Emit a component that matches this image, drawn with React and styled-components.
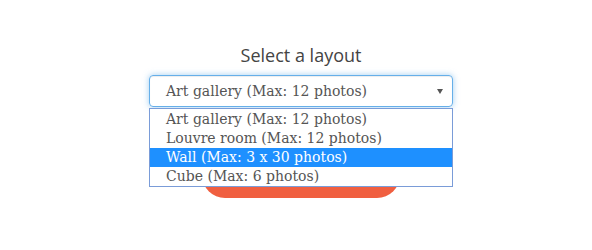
import React from "react";
import styled, { createGlobalStyle } from "styled-components";

const layouts = [
  "Art gallery (Max: 12 photos)",
  "Louvre room (Max: 12 photos)",
  "Wall (Max: 3 x 30 photos)",
  "Cube (Max: 6 photos)",
];

const GlobalStyle = createGlobalStyle`
  html, body {
    margin: 0;
    background: #fff;
  }
`;

const Page = styled.div`
  width: 592px;
  height: 250px;
  display: flex;
  flex-direction: column;
  align-items: center;
  padding: 43px 0 0 10px;
  box-sizing: border-box;
`;

const Title = styled.h3`
  margin: 0;
  font-family: "Open Sans", sans-serif;
  font-weight: 400;
  font-size: 18px;
  line-height: 24px;
  color: #444;
`;

const SelectWrap = styled.div`
  position: relative;
  width: 304px;
  margin-top: 8px;
`;

const SelectBox = styled.div`
  height: 32px;
  box-sizing: border-box;
  border: 1px solid #66afe9;
  border-radius: 4px;
  box-shadow: inset 0 1px 1px rgba(0, 0, 0, 0.075), 0 0 6px rgba(102, 175, 233, 0.6);
  display: flex;
  align-items: center;
  justify-content: space-between;
  padding: 0 9px 0 16px;
  font-family: "DejaVu Serif", serif;
  font-size: 14px;
  color: #555;
`;

const Arrow = styled.span`
  width: 0;
  height: 0;
  border-left: 3px solid transparent;
  border-right: 3px solid transparent;
  border-top: 5px solid #555;
`;

const List = styled.ul`
  position: absolute;
  top: 33px;
  left: 0;
  right: 0;
  margin: 0;
  padding: 1px 0 0;
  list-style: none;
  background: #fff;
  border: 1px solid #7a9cd8;
  z-index: 2;
`;

const Option = styled.li`
  height: 19px;
  line-height: 19px;
  padding-left: 16px;
  font-family: "DejaVu Serif", serif;
  font-size: 14px;
  color: ${(p) => (p.$active ? "#fff" : "#555")};
  background: ${(p) => (p.$active ? "#1e90ff" : "transparent")};
`;

const Button = styled.div`
  width: 198px;
  height: 46px;
  margin-top: 45px;
  border-radius: 23px;
  background: #f05f40;
`;

export default function App() {
  return (
    <>
      <GlobalStyle />
      <Page>
        <Title>Select a layout</Title>
        <SelectWrap>
          <SelectBox>
            <span>{layouts[0]}</span>
            <Arrow />
          </SelectBox>
          <List>
            {layouts.map((item, i) => (
              <Option key={i} $active={i === 2}>
                {item}
              </Option>
            ))}
          </List>
        </SelectWrap>
        <Button />
      </Page>
    </>
  );
}
